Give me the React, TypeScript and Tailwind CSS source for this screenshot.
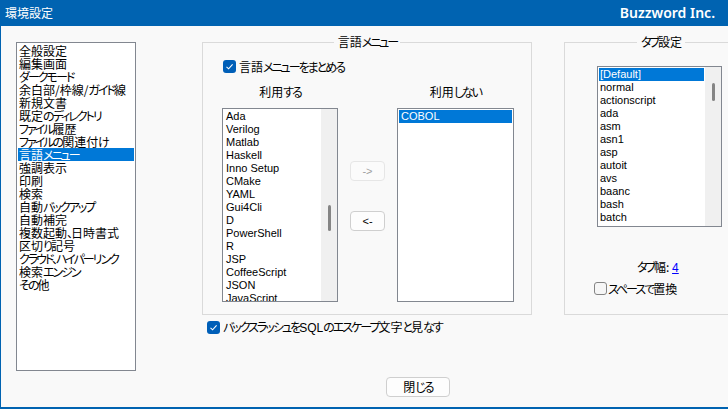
import React from "react";

function JP({ text }: { text: string }) {
  const parts = text.match(/[\u3040-\u30ff\u3001\u3002]+|[^\u3040-\u30ff\u3001\u3002]+/g) || [];
  return (
    <>
      {parts.map((p, i) =>
        /[\u3040-\u30ff\u3001\u3002]/.test(p) ? (
          <span key={i} className="tracking-[-2px]">
            {p}
          </span>
        ) : (
          <span key={i}>{p}</span>
        )
      )}
    </>
  );
}

function Check({ checked }: { checked: boolean }) {
  if (checked) {
    return (
      <span className="w-[13px] h-[13px] shrink-0 rounded-[3px] bg-[#005fb8] flex items-center justify-center">
        <svg width="9" height="9" viewBox="0 0 9 9">
          <path d="M1.5 4.8 L3.6 6.8 L7.6 2.4" fill="none" stroke="white" strokeWidth="1.1" />
        </svg>
      </span>
    );
  }
  return <span className="w-[13px] h-[13px] shrink-0 rounded-[3px] border border-[#858585] bg-[#f6f6f6]" />;
}

function ScrollBar({ top, h }: { top: number; h: number }) {
  return (
    <div className="w-[16px] shrink-0 bg-[#f0f0f0] flex flex-col items-center" style={{ paddingTop: top }}>
      <div className="w-[3px] rounded-[2px] bg-[#858585]" style={{ height: h }} />
    </div>
  );
}

const nav = [
  "全般設定",
  "編集画面",
  "ダークモード",
  "余白部/枠線/ガイド線",
  "新規文書",
  "既定のディレクトリ",
  "ファイル履歴",
  "ファイルの関連付け",
  "言語メニュー",
  "強調表示",
  "印刷",
  "検索",
  "自動バックアップ",
  "自動補完",
  "複数起動、日時書式",
  "区切り記号",
  "クラウド、ハイパーリンク",
  "検索エンジン",
  "その他",
];

const used = [
  "Ada",
  "Verilog",
  "Matlab",
  "Haskell",
  "Inno Setup",
  "CMake",
  "YAML",
  "Gui4Cli",
  "D",
  "PowerShell",
  "R",
  "JSP",
  "CoffeeScript",
  "JSON",
  "JavaScript",
];

const tabs = [
  "[Default]",
  "normal",
  "actionscript",
  "ada",
  "asm",
  "asn1",
  "asp",
  "autoit",
  "avs",
  "baanc",
  "bash",
  "batch",
  "bibtex",
];

export default function App() {
  return (
    <div className="w-[728px] h-[409px] overflow-hidden bg-[#f9f9f9] border-l border-b-2 border-[#0063b1] flex flex-col text-[12px] text-black font-['Noto_Sans_CJK_JP',sans-serif] [font-feature-settings:'palt']">
      <div className="h-[26px] shrink-0 bg-[#0063b1] flex items-center justify-between pl-[4px] pr-[13px] text-white">
        <span className="text-[12px] leading-[14px]">環境設定</span>
        <span className="font-['Noto_Sans',sans-serif] font-semibold text-[14px] leading-[16px]">Buzzword Inc.</span>
      </div>

      <div className="flex items-start pl-[15px]">
        {/* left nav list */}
        <div className="mt-[16px] w-[120px] h-[329px] shrink-0 border border-[#828790] bg-white p-[1px] overflow-hidden">
          {nav.map((t) => (
            <div
              key={t}
              className={
                t === "言語メニュー"
                  ? "h-[13px] leading-[13px] pl-[1px] whitespace-nowrap bg-[#0078d7] text-white"
                  : "h-[13px] leading-[13px] pl-[1px] whitespace-nowrap"
              }
            >
              <JP text={t} />
            </div>
          ))}
        </div>

        {/* middle column */}
        <div className="ml-[66px] flex flex-col shrink-0">
          <fieldset className="w-[330px] h-[280px] mt-[9px] border border-[#dadada]">
            <legend className="mx-auto pl-[4px] pr-[3px] leading-[14px]">
              <JP text="言語メニュー" />
            </legend>
            <div className="mt-[11px] ml-[20px] flex items-center gap-[3px] h-[13px]">
              <Check checked />
              <span className="leading-[13px]">
                <JP text="言語メニューをまとめる" />
              </span>
            </div>
            <div className="mt-[12px] ml-[19px] flex items-start gap-[12px]">
              <div className="w-[116px] flex flex-col items-center">
                <span className="leading-[14px]">
                  <JP text="利用する" />
                </span>
                <div className="mt-[9px] w-[116px] h-[194px] border border-[#828790] bg-white flex overflow-hidden">
                  <div className="flex-1 p-[1px] overflow-hidden font-['Liberation_Sans',sans-serif] text-[11px]">
                    {used.map((t) => (
                      <div key={t} className="h-[13px] leading-[13px] pl-[2px] whitespace-nowrap">
                        {t}
                      </div>
                    ))}
                  </div>
                  <ScrollBar top={96} h={26} />
                </div>
              </div>
              <div className="pt-[76px] flex flex-col gap-[30px] font-['Liberation_Sans',sans-serif] text-[11px]">
                <button className="w-[35px] h-[20px] border border-[#e6e6e6] rounded-[4px] bg-[#fbfbfb] text-[#a0a0a0] flex items-center justify-center">
                  -&gt;
                </button>
                <button className="w-[35px] h-[20px] border border-[#cfcfcf] rounded-[4px] bg-[#fdfdfd] text-black flex items-center justify-center">
                  &lt;-
                </button>
              </div>
              <div className="w-[117px] flex flex-col items-center">
                <span className="leading-[14px]">
                  <JP text="利用しない" />
                </span>
                <div className="mt-[9px] w-[117px] h-[194px] border border-[#828790] bg-white p-[1px] font-['Liberation_Sans',sans-serif] text-[11px]">
                  <div className="h-[13px] leading-[13px] pl-[2px] bg-[#0078d7] text-white">COBOL</div>
                </div>
              </div>
            </div>
          </fieldset>

          <div className="mt-[6px] ml-[5px] flex items-center gap-[3px] h-[13px]">
            <Check checked />
            <span className="leading-[13px] whitespace-nowrap">
              <JP text="バックスラッシュを" />
              <span className="font-['Liberation_Sans',sans-serif]">SQL</span>
              <JP text="のエスケープ文字と見なす" />
            </span>
          </div>

          <button className="mt-[43px] ml-[184px] w-[64px] h-[20px] border border-[#cfcfcf] rounded-[4px] bg-[#fdfdfd] flex items-center justify-center leading-[14px]">
            <JP text="閉じる" />
          </button>
        </div>

        {/* right group */}
        <fieldset className="ml-[32px] w-[194px] h-[280px] mt-[9px] shrink-0 border border-[#dadada]">
          <legend className="mx-auto pl-[4px] pr-[3px] leading-[14px]">
            <JP text="タブ設定" />
          </legend>
          <div className="mt-[17px] ml-[32px] w-[125px] h-[161px] border border-[#828790] bg-white flex overflow-hidden">
            <div className="flex-1 p-[1px] overflow-hidden font-['Liberation_Sans',sans-serif] text-[11px]">
              {tabs.map((t, i) => (
                <div
                  key={t}
                  className={
                    i === 0
                      ? "h-[13px] leading-[13px] pl-[1px] whitespace-nowrap bg-[#0078d7] text-white"
                      : "h-[13px] leading-[13px] pl-[1px] whitespace-nowrap"
                  }
                >
                  {t}
                </div>
              ))}
            </div>
            <ScrollBar top={16} h={18} />
          </div>
          <div className="mt-[33px] ml-[72px] leading-[14px] whitespace-nowrap">
            <JP text="タブ幅" />: <span className="text-[#0000ff] underline font-['Liberation_Sans',sans-serif]">4</span>
          </div>
          <div className="mt-[7px] ml-[29px] flex items-center gap-[1px] h-[13px]">
            <Check checked={false} />
            <span className="leading-[13px] whitespace-nowrap">
              <JP text="スペースで置換" />
            </span>
          </div>
        </fieldset>
      </div>
    </div>
  );
}
